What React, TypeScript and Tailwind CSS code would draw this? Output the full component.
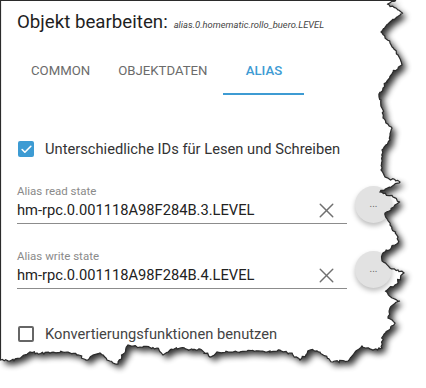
import { X, Check } from 'lucide-react'

// Umriss des "abgerissenen" Papiers (Screenshot-Rand)
const EDGE: [number, number][] = [
  [0.5, 0.5], [396, 0.5], [387, 4], [403, 13], [390, 22], [381, 32], [390, 43], [398, 55],
  [402, 65], [393, 72], [383, 88], [379, 97], [383, 110], [383, 118], [392, 128], [390, 140],
  [382, 150], [381, 170], [385, 177], [400, 182], [380, 192], [393, 197], [400, 202],
  [385, 213], [390, 225], [398, 237], [398, 243], [383, 253], [382, 261], [390, 268],
  [404, 273], [395, 285], [385, 291], [392, 298], [400, 301], [390, 308], [388, 318],
  [395, 323], [383, 336], [382, 348], [373, 350], [362, 346], [353, 355], [348, 361],
  [333, 362], [320, 352], [310, 350], [300, 360], [293, 355], [280, 350], [267, 352],
  [247, 351], [233, 352], [217, 352], [210, 357], [200, 349], [193, 350], [180, 348],
  [170, 350], [163, 355], [157, 348], [140, 347], [128, 345], [118, 364], [113, 363],
  [107, 360], [100, 353], [93, 355], [88, 360], [77, 355], [67, 352], [50, 353], [37, 353],
  [30, 352], [20, 358], [10, 361], [0.5, 360],
]

function jaggedPath() {
  let seed = 7
  const rnd = () => {
    seed = (seed * 9301 + 49297) % 233280
    return seed / 233280 - 0.5
  }
  const out: string[] = []
  for (let i = 0; i < EDGE.length; i++) {
    const [x1, y1] = EDGE[i]
    const [x2, y2] = EDGE[(i + 1) % EDGE.length]
    // die geraden Kanten (oben/links) nicht verwackeln
    const straight = (y1 === 0.5 && y2 === 0.5) || (x1 === 0.5 && x2 === 0.5)
    const len = Math.hypot(x2 - x1, y2 - y1)
    const steps = straight ? 1 : Math.max(1, Math.round(len / 2))
    for (let s = 0; s < steps; s++) {
      const t = s / steps
      let x = x1 + (x2 - x1) * t
      let y = y1 + (y2 - y1) * t
      if (!straight && s > 0) {
        x += rnd() * 2.2
        y += rnd() * 2.2
      }
      out.push(`${x.toFixed(1)},${y.toFixed(1)}`)
    }
  }
  return 'M' + out.join(' L') + ' Z'
}

const tear = jaggedPath()

function TornEdge() {
  return (
    <svg className="pointer-events-none absolute inset-0" width="426" height="388" viewBox="0 0 426 388">
      <defs>
        <filter id="blur" x="-10%" y="-10%" width="130%" height="130%">
          <feGaussianBlur stdDeviation="3" />
        </filter>
        <mask id="outside">
          <rect width="426" height="388" fill="white" />
          <path d={tear} fill="black" />
        </mask>
      </defs>
      <g mask="url(#outside)">
        <rect width="426" height="388" fill="white" />
        <path d={tear} fill="#000" opacity="0.8" transform="translate(4 4)" filter="url(#blur)" />
      </g>
      <path d={tear} fill="none" stroke="#2b2b2b" strokeWidth="1.2" />
    </svg>
  )
}

function AliasField({ label, value }: { label: string; value: string }) {
  return (
    <div className="flex items-center">
      <div className="w-[330px]">
        <div className="text-[11.5px] leading-[14px] text-[#8a8a8a]">{label}</div>
        <div className="flex h-[26px] items-center border-b border-[#8c8c8c]">
          <span className="flex-1 text-[14.7px] text-[#222]">{value}</span>
          <X size={25} strokeWidth={1.4} className="mr-[8px] text-[#707070]" />
        </div>
      </div>
      <div className="ml-[8px] flex h-[37px] w-[37px] items-center justify-center rounded-full bg-[#e2e2e2] text-[10px] leading-none text-[#666] shadow-[0_3px_5px_rgba(0,0,0,0.25)]">
        ...
      </div>
    </div>
  )
}

export default function App() {
  return (
    <div className="relative h-[388px] w-[426px] overflow-hidden bg-white font-['Roboto',sans-serif]">
      <div className="px-[17px] pt-[10px]">
        <div className="flex items-baseline gap-[6px] leading-[24px]">
          <span className="text-[18.7px] text-[#1f1f1f]">Objekt bearbeiten:</span>
          <span className="text-[9.4px] italic text-[#444]">alias.0.homematic.rollo_buero.LEVEL</span>
        </div>

        <div className="mt-[10px] flex h-[48px] text-[13.2px] uppercase">
          <div className="flex items-center px-[14px] text-[#6b6b6b]">Common</div>
          <div className="flex items-center px-[14px] text-[#6b6b6b]">Objektdaten</div>
          <div className="ml-[2px] flex w-[81px] items-center justify-center border-b-2 border-[#3d9bd3] pt-[2px] font-medium text-[#3d9bd3]">
            Alias
          </div>
        </div>

        <label className="mt-[33px] flex h-[42px] items-center gap-[11px]">
          <span className="ml-px flex h-[16px] w-[16px] items-center justify-center rounded-[2px] bg-[#3d9bd3]">
            <Check size={13} strokeWidth={3} className="text-white" />
          </span>
          <span className="text-[14.7px] text-[#333]">Unterschiedliche IDs für Lesen und Schreiben</span>
        </label>

        <div className="mt-[14px]">
          <AliasField label="Alias read state" value="hm-rpc.0.001118A98F284B.3.LEVEL" />
        </div>
        <div className="mt-[25px]">
          <AliasField label="Alias write state" value="hm-rpc.0.001118A98F284B.4.LEVEL" />
        </div>

        <label className="mt-[24px] flex h-[42px] items-center gap-[11px]">
          <span className="ml-px h-[16px] w-[16px] rounded-[2px] border-2 border-[#666]" />
          <span className="text-[14.7px] text-[#444]">Konvertierungsfunktionen benutzen</span>
        </label>
      </div>
      <TornEdge />
    </div>
  )
}
